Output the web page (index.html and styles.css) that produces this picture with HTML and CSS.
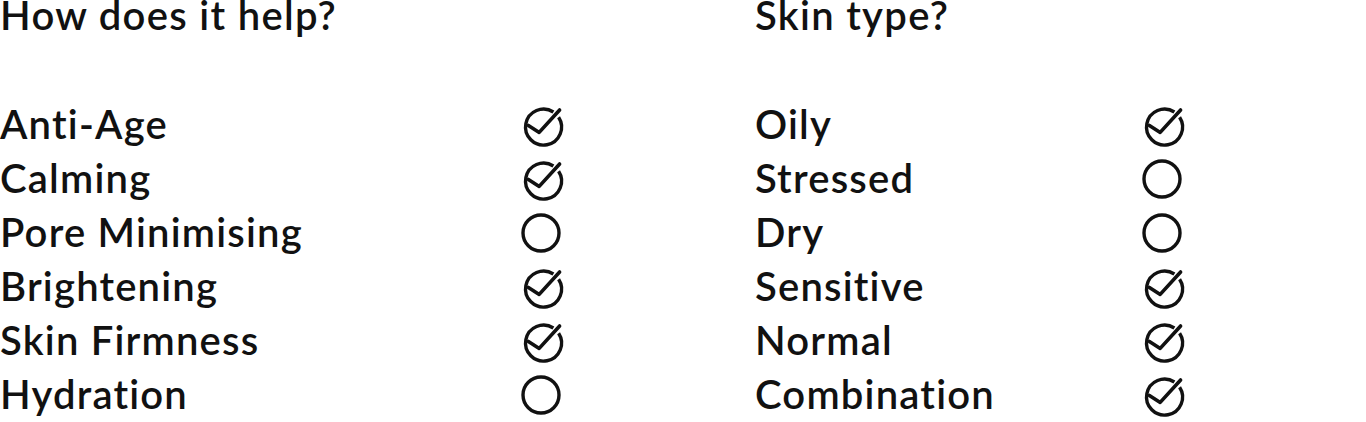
FILE: index.html
```html
<!DOCTYPE html>
<html lang="en">
<head>
<meta charset="utf-8">
<title>Product benefits</title>
<link rel="stylesheet" href="styles.css">
</head>
<body>
<svg width="0" height="0" class="defs" aria-hidden="true">
  <defs>
    <symbol id="check" viewBox="0 0 40 40" overflow="visible">
      <path d="M37.6 12.2 A18 18 0 1 1 32.4 7" fill="none" stroke="currentColor" stroke-width="3.4"/>
      <path d="M7.4 20.4 L18.2 27.4 L38.6 5" fill="none" stroke="currentColor" stroke-width="3.6" stroke-linecap="round" stroke-linejoin="round"/>
    </symbol>
    <symbol id="empty" viewBox="0 0 40 40">
      <circle cx="20" cy="20" r="18" fill="none" stroke="currentColor" stroke-width="3.4"/>
    </symbol>
  </defs>
</svg>
<main class="page">
  <section class="col col-help">
    <h2 class="col-title">How does it help?</h2>
    <ul class="list">
      <li class="row"><span class="label">Anti-Age</span><svg class="icon"><use href="#check"/></svg></li>
      <li class="row"><span class="label">Calming</span><svg class="icon"><use href="#check"/></svg></li>
      <li class="row"><span class="label">Pore Minimising</span><svg class="icon"><use href="#empty"/></svg></li>
      <li class="row"><span class="label">Brightening</span><svg class="icon"><use href="#check"/></svg></li>
      <li class="row"><span class="label">Skin Firmness</span><svg class="icon"><use href="#check"/></svg></li>
      <li class="row"><span class="label">Hydration</span><svg class="icon"><use href="#empty"/></svg></li>
    </ul>
  </section>
  <section class="col col-skin">
    <h2 class="col-title">Skin type?</h2>
    <ul class="list">
      <li class="row"><span class="label">Oily</span><svg class="icon"><use href="#check"/></svg></li>
      <li class="row"><span class="label">Stressed</span><svg class="icon"><use href="#empty"/></svg></li>
      <li class="row"><span class="label">Dry</span><svg class="icon"><use href="#empty"/></svg></li>
      <li class="row"><span class="label">Sensitive</span><svg class="icon"><use href="#check"/></svg></li>
      <li class="row"><span class="label">Normal</span><svg class="icon"><use href="#check"/></svg></li>
      <li class="row"><span class="label">Combination</span><svg class="icon"><use href="#check"/></svg></li>
    </ul>
  </section>
</main>
</body>
</html>
```
FILE: styles.css
```css
html, body {
  margin: 0;
  padding: 0;
  background: #fff;
}
body {
  font-family: Lato, "Open Sans", sans-serif;
  color: #111;
  overflow: hidden;
}
.defs {
  position: absolute;
}
.page {
  display: flex;
}
.col-help {
  width: 755px;
}
.col-title {
  margin: 0 0 67px;
  font-size: 40px;
  font-weight: 600;
  line-height: 30px;
  letter-spacing: 1.3px;
}
.list {
  list-style: none;
  margin: 0;
  padding: 0;
}
.row {
  display: grid;
  align-items: center;
  height: 54px;
  font-size: 40px;
  font-weight: 600;
  line-height: 54px;
  letter-spacing: 1.2px;
}
.col-help .row {
  grid-template-columns: 521px 40px;
}
.col-skin .row {
  grid-template-columns: 387px 40px;
}
.icon {
  width: 40px;
  height: 40px;
  margin-top: 2px;
  overflow: visible;
  color: #111;
}
```
